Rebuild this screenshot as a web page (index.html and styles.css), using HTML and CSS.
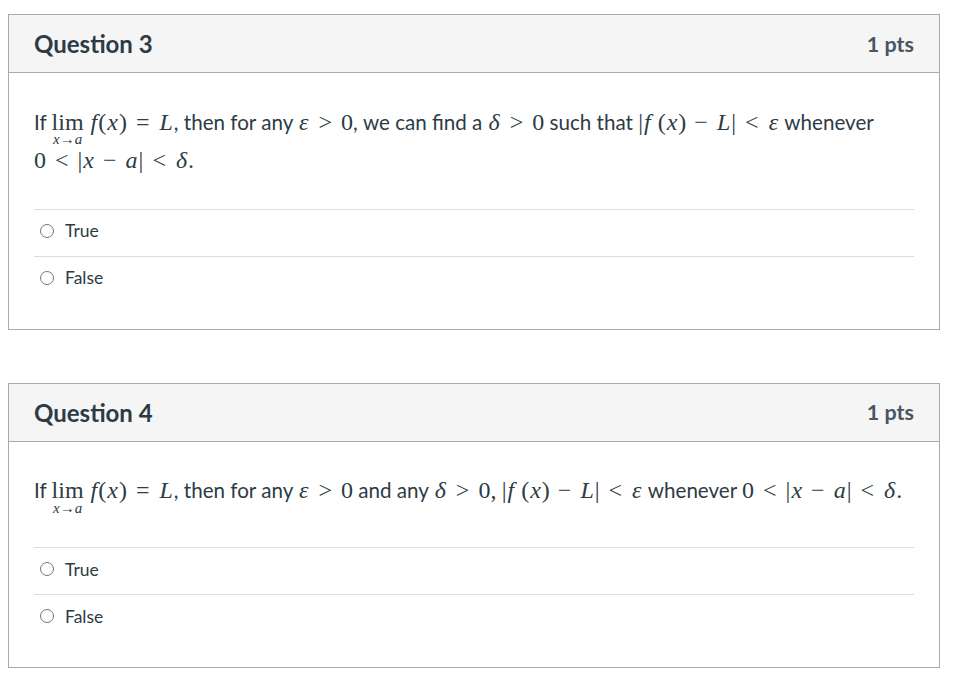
FILE: index.html
```html
<!DOCTYPE html>
<html>
<head>
<meta charset="utf-8">
<link rel="stylesheet" href="styles.css">
</head>
<body>
<div class="page">
  <section class="card">
    <header class="card-head">
      <h2 class="title">Question 3</h2>
      <span class="pts">1 pts</span>
    </header>
    <div class="card-body">
      <p class="question">If <span class="m"><span class="lim"><span class="lim-op">lim</span><span class="lim-sub"><i>x</i>→<i>a</i></span></span><span class="sp"></span><i>f</i>(<i>x</i>)<span class="rel">=</span><i>L</i></span>, then for any <span class="m"><i>ε</i><span class="rel">&gt;</span>0</span>, we can find a <span class="m"><i>δ</i><span class="rel">&gt;</span>0</span> such that <span class="m">|<i>f</i> (<i>x</i>)<span class="bin">−</span><i>L</i>|<span class="rel">&lt;</span><i>ε</i></span> whenever <span class="m">0<span class="rel">&lt;</span>|<i>x</i><span class="bin">−</span><i>a</i>|<span class="rel">&lt;</span><i>δ</i>.</span></p>
      <ul class="answers">
        <li class="answer"><span class="radio"></span>True</li>
        <li class="answer"><span class="radio"></span>False</li>
      </ul>
    </div>
  </section>
  <section class="card">
    <header class="card-head">
      <h2 class="title">Question 4</h2>
      <span class="pts">1 pts</span>
    </header>
    <div class="card-body">
      <p class="question">If <span class="m"><span class="lim"><span class="lim-op">lim</span><span class="lim-sub"><i>x</i>→<i>a</i></span></span><span class="sp"></span><i>f</i>(<i>x</i>)<span class="rel">=</span><i>L</i></span>, then for any <span class="m"><i>ε</i><span class="rel">&gt;</span>0</span> and any <span class="m"><i>δ</i><span class="rel">&gt;</span>0,</span> <span class="m">|<i>f</i> (<i>x</i>)<span class="bin">−</span><i>L</i>|<span class="rel">&lt;</span><i>ε</i></span> whenever <span class="m">0<span class="rel">&lt;</span>|<i>x</i><span class="bin">−</span><i>a</i>|<span class="rel">&lt;</span><i>δ</i>.</span></p>
      <ul class="answers">
        <li class="answer"><span class="radio"></span>True</li>
        <li class="answer"><span class="radio"></span>False</li>
      </ul>
    </div>
  </section>
</div>
</body>
</html>
```
FILE: styles.css
```css
html, body {
  margin: 0;
  padding: 0;
  background: #ffffff;
}
body {
  font-family: Lato, "Liberation Sans", sans-serif;
  color: #2d3b45;
}
.page {
  padding: 14px 28px 0 8px;
  display: flex;
  flex-direction: column;
  gap: 53px;
}
.card {
  border: 1px solid #aaaaaa;
}
.card-head {
  background: #f5f5f5;
  border-bottom: 1px solid #aaaaaa;
  height: 57px;
  display: flex;
  align-items: center;
  justify-content: space-between;
  padding: 0 25px;
}
.title {
  margin: 0;
  font-size: 24px;
  font-weight: 700;
  color: #2d3b45;
}
.pts {
  font-size: 21.5px;
  font-weight: 700;
  color: #4a5560;
}
.card-body {
  padding: 33.5px 25px 26px 25px;
}
.question {
  margin: 0;
  font-size: 20.6px;
  line-height: 30px;
}
.m {
  font-family: "Liberation Serif", "DejaVu Serif", serif;
  font-size: 24px;
  white-space: nowrap;
}
.m i {
  font-style: italic;
  padding: 0 1px;
}
.rel {
  padding: 0 9px;
}
.bin {
  padding: 0 8px;
}
.sp {
  display: inline-block;
  width: 6px;
}
.lim {
  display: inline-flex;
  flex-direction: column;
  align-items: center;
  line-height: 1;
  vertical-align: baseline;
}
.lim-op {
  line-height: 20px;
}
.lim-sub {
  font-size: 15px;
  line-height: 12px;
  margin-top: 1.5px;
}
.lim-sub i {
  padding: 0;
}
.answers {
  list-style: none;
  margin: 33.5px 0 0 0;
  padding: 0;
}
.answer {
  border-top: 1px solid #dddddd;
  height: 42px;
  padding-bottom: 4px;
  display: flex;
  align-items: center;
  font-size: 17.5px;
  color: #2d3b45;
}
.radio {
  width: 12px;
  height: 12px;
  border: 1px solid #777777;
  border-radius: 50%;
  margin: 0 11px 0 6px;
  flex-shrink: 0;
}
```
